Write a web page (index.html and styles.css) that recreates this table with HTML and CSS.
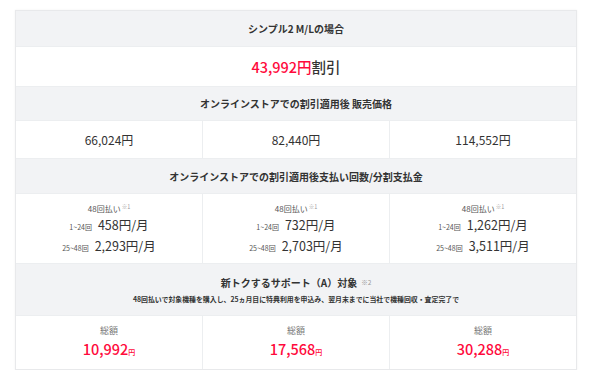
FILE: index.html
```html
<!DOCTYPE html>
<html lang="ja">
<head>
<meta charset="utf-8">
<link rel="stylesheet" href="styles.css">
</head>
<body>
<div class="page">
  <div class="table">
    <div class="row head h1"><span>シンプル2 M/Lの場合</span></div>
    <div class="row discount"><span class="red">43,992円</span><span>割引</span></div>
    <div class="row head h3"><span>オンラインストアでの割引適用後 販売価格</span></div>
    <div class="row cols prices">
      <div class="cell">66,024円</div>
      <div class="cell">82,440円</div>
      <div class="cell">114,552円</div>
    </div>
    <div class="row head h5"><span>オンラインストアでの割引適用後支払い回数/分割支払金</span></div>
    <div class="row cols plans">
      <div class="cell plan">
        <div class="plan-title">48回払い<span class="note">※1</span></div>
        <div class="plan-line"><span class="term">1~24回</span><span class="amt">458円/月</span></div>
        <div class="plan-line"><span class="term">25~48回</span><span class="amt">2,293円/月</span></div>
      </div>
      <div class="cell plan">
        <div class="plan-title">48回払い<span class="note">※1</span></div>
        <div class="plan-line"><span class="term">1~24回</span><span class="amt">732円/月</span></div>
        <div class="plan-line"><span class="term">25~48回</span><span class="amt">2,703円/月</span></div>
      </div>
      <div class="cell plan">
        <div class="plan-title">48回払い<span class="note">※1</span></div>
        <div class="plan-line"><span class="term">1~24回</span><span class="amt">1,262円/月</span></div>
        <div class="plan-line"><span class="term">25~48回</span><span class="amt">3,511円/月</span></div>
      </div>
    </div>
    <div class="row head h7">
      <div class="support-title">新トクするサポート（A）対象<span class="note">※2</span></div>
      <div class="support-sub">48回払いで対象機種を購入し、25ヵ月目に特典利用を申込み、翌月末までに当社で機種回収・査定完了で</div>
    </div>
    <div class="row cols totals">
      <div class="cell total">
        <div class="total-label">総額</div>
        <div class="total-price">10,992<span class="yen">円</span></div>
      </div>
      <div class="cell total">
        <div class="total-label">総額</div>
        <div class="total-price">17,568<span class="yen">円</span></div>
      </div>
      <div class="cell total">
        <div class="total-label">総額</div>
        <div class="total-price">30,288<span class="yen">円</span></div>
      </div>
    </div>
  </div>
</div>
</body>
</html>
```
FILE: styles.css
```css
* { box-sizing: border-box; }
html, body { margin: 0; padding: 0; background: #fff; }
body {
  font-family: "Noto Sans CJK JP", "Noto Sans", sans-serif;
  color: #333;
}
.page { padding: 10px 13px 0 15px; }
.table {
  width: 562px;
  border: 1px solid #e8e9eb;
  box-shadow: 0 0 2px rgba(0,0,0,0.06);
  display: flex;
  flex-direction: column;
}
.row {
  display: flex;
  align-items: center;
  justify-content: center;
  border-top: 1px solid #eceef0;
}
.row:first-child { border-top: 0; }
.head {
  background: #f2f3f5;
  font-weight: 700;
  font-size: 10px;
  color: #333;
}
.h1 { height: 35px; }
.discount { height: 40px; font-size: 14.5px; font-weight: 500; }
.red { color: #ff0a3c; }
.h3 { height: 34px; }
.cols { align-items: stretch; }
.cell {
  flex: 1 1 0;
  display: flex;
  flex-direction: column;
  align-items: center;
  justify-content: center;
  border-left: 1px solid #eceef0;
}
.cell:first-child { border-left: 0; }
.prices { height: 38px; font-size: 12px; }
.h5 { height: 35px; }
.plans { height: 70px; }
.plan { gap: 1px; padding-top: 1px; }
.plan-title { font-size: 8px; color: #555; line-height: 13px; }
.note { font-size: 5.5px; color: #999; vertical-align: 3px; margin-left: 1px; font-weight: 400; }
.plan-line { display: flex; align-items: baseline; line-height: 18px; }
.term { font-size: 7px; color: #555; margin-right: 6px; }
.amt { font-size: 12.5px; color: #333; }
.h7 { height: 52px; flex-direction: column; gap: 4px; }
.support-title { font-size: 10px; }
.support-title .note { font-size: 6.5px; margin-left: 4px; vertical-align: 2px; }
.support-sub { font-size: 6.9px; }
.totals { height: 54px; }
.total { gap: 2px; }
.total-label { font-size: 9px; color: #777; line-height: 14px; }
.total-price { font-size: 14.5px; font-weight: 500; color: #ff0a3c; line-height: 18px; }
.yen { font-size: 7px; }
```
